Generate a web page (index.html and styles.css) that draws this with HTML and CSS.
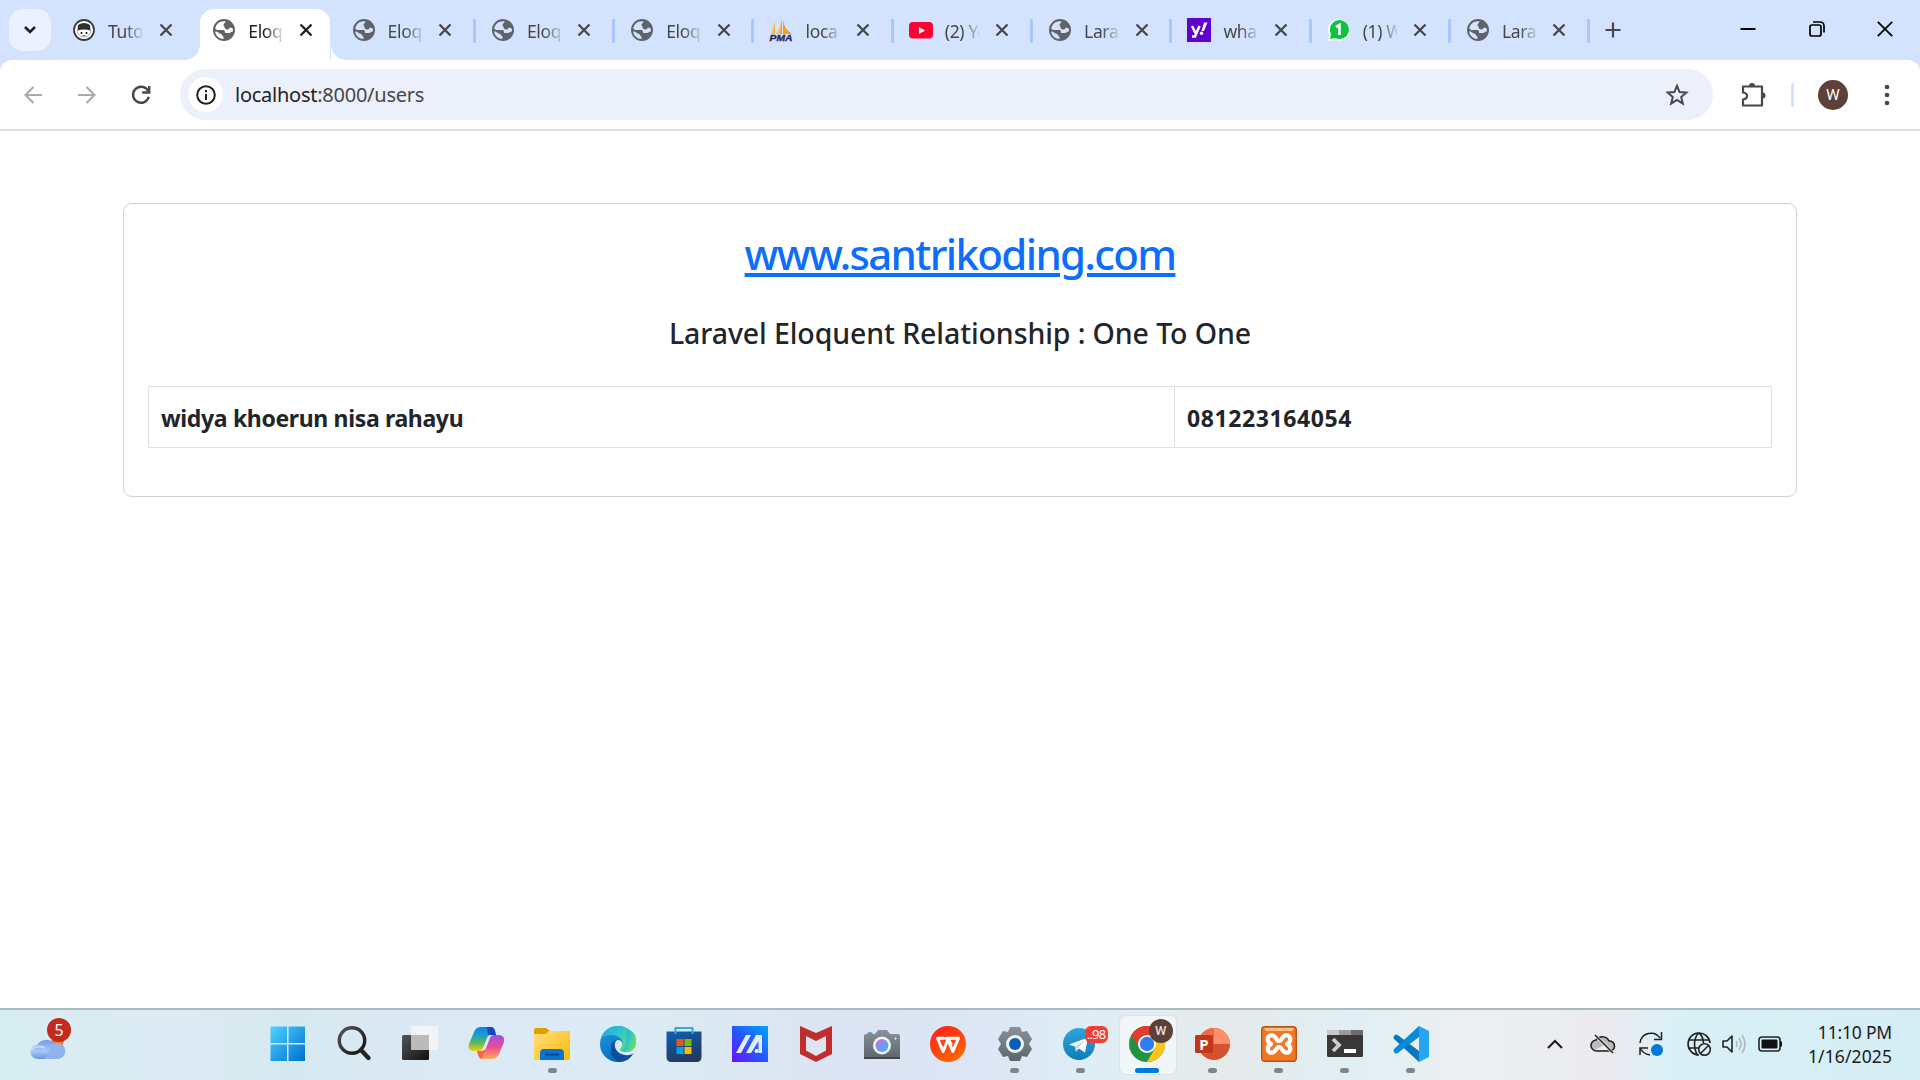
FILE: index.html
```html
<!DOCTYPE html>
<html lang="en">
<head>
<meta charset="utf-8">
<title>Eloquent</title>
<link rel="stylesheet" href="styles.css">
</head>
<body>
<svg class="defs" aria-hidden="true">
  <defs>
    <symbol id="globe" viewBox="0 0 22 22"><path fill="#5f6368" fill-rule="evenodd" d="M11 0a11 11 0 1 0 0 22a11 11 0 0 0 0-22zM12.500 2.300C7 1.600 3.300 4.500 2.200 9.500L4 11h6.500c1.500 0 1.500 2 1.500 3h4c1.500 0 2-1.500 3.800-1.500.3-1 .2-2-.1-3l-2.200-1c-1.500 0-1 2-3 2-2 0-3-1-3-2.500S10.500 7.500 10.500 6s2-1.500 2-3.700zM2.100 12.500c.6 4.300 4 7.400 8.400 7.500v-2.500c-1.500 0-1.500-3-3.500-3-1.500 0-1.500-2-4.900-2z"/></symbol>
    <symbol id="close" viewBox="0 0 14 14"><path d="M1.500 1.500l11 11m0-11l-11 11" fill="none" stroke="currentColor" stroke-width="2.300"/></symbol>
    <linearGradient id="win" x2="1" y2="1"><stop stop-color="#4cd4ff"/><stop offset="1" stop-color="#006fd0"/></linearGradient>
    <linearGradient id="glass" x2="1" y2="1"><stop stop-color="#555"/><stop offset="1" stop-color="#111"/></linearGradient>
    <linearGradient id="cop1" x2="0" y2="1"><stop stop-color="#1b7ee0"/><stop offset=".3" stop-color="#159bd8"/><stop offset=".65" stop-color="#5bb755"/><stop offset="1" stop-color="#f5ce16"/></linearGradient>
    <linearGradient id="cop2" x2="0" y2="1"><stop stop-color="#9a4ff0"/><stop offset=".5" stop-color="#ee4c91"/><stop offset="1" stop-color="#ffac57"/></linearGradient>
    <linearGradient id="fold" x2="1" y2="1"><stop stop-color="#ffe07a"/><stop offset="1" stop-color="#fbb908"/></linearGradient>
    <linearGradient id="edge1" x2="1" y2=".6"><stop stop-color="#22a5df"/><stop offset=".5" stop-color="#31c3d0"/><stop offset="1" stop-color="#68e84b"/></linearGradient>
    <linearGradient id="edge2" x2=".5" y2="1"><stop stop-color="#1a9ee0"/><stop offset="1" stop-color="#0868bd"/></linearGradient>
    <linearGradient id="store" x2=".4" y2="1"><stop stop-color="#0a62b4"/><stop offset="1" stop-color="#233a61"/></linearGradient>
    <linearGradient id="asus" x1="0" y1="1" x2="1" y2="0"><stop stop-color="#6a10ff"/><stop offset=".5" stop-color="#2459ff"/><stop offset="1" stop-color="#00a5ff"/></linearGradient>
    <linearGradient id="lens" x2=".7" y2="1"><stop stop-color="#c86ee8"/><stop offset="1" stop-color="#3fb1f0"/></linearGradient>
    <linearGradient id="grey" x2="0" y2="1"><stop stop-color="#88929a"/><stop offset="1" stop-color="#5d656c"/></linearGradient>
    <linearGradient id="wps" x2=".6" y2="1"><stop stop-color="#ff1b1b"/><stop offset="1" stop-color="#ff6505"/></linearGradient>
    <linearGradient id="tele" x2="0" y2="1"><stop stop-color="#2ea6df"/><stop offset="1" stop-color="#0c7cbb"/></linearGradient>
    <linearGradient id="cloud" x2="0" y2="1"><stop stop-color="#6f9ce8"/><stop offset=".6" stop-color="#a9c8f8"/><stop offset="1" stop-color="#6c93dd"/></linearGradient>
  </defs>
</svg>

<header class="tabstrip">
  <button class="tab-search"><svg width="14" height="10" viewBox="0 0 14 10"><path d="M2 2l5 5 5-5" fill="none" stroke="#1f1f1f" stroke-width="2.600"/></svg></button>
  <nav class="tabs">
    <div class="tab plain"><svg class="fav" viewBox="0 0 22 22"><circle cx="11" cy="11" r="10" fill="#fff" stroke="#3b3b3b" stroke-width="1.800"/><path d="M5 6q6-4 12 0l.5 5.500q-6.500-2-13 0z" fill="#2f3033"/><path d="M4.500 11v3q2 4 6.500 4t6.500-4v-3" fill="none" stroke="#aaa"/><circle cx="8.500" cy="14" r="1"/><circle cx="13.500" cy="14" r="1"/><path d="M9.500 16.500h3" stroke="#777"/></svg><span class="label">Tutorial</span><svg class="x"><use href="#close"/></svg></div>
    <div class="tab active"><svg class="fav"><use href="#globe"/></svg><span class="label">Eloquent</span><svg class="x"><use href="#close"/></svg></div>
    <div class="tab"><svg class="fav"><use href="#globe"/></svg><span class="label">Eloquent</span><svg class="x"><use href="#close"/></svg></div>
    <div class="tab"><svg class="fav"><use href="#globe"/></svg><span class="label">Eloquent</span><svg class="x"><use href="#close"/></svg></div>
    <div class="tab"><svg class="fav"><use href="#globe"/></svg><span class="label">Eloquent</span><svg class="x"><use href="#close"/></svg></div>
    <div class="tab"><svg class="fav wide" viewBox="0 0 24 24"><path d="M2 16L6 4v12zM7 16Q12 9 13 0v16zM14 2q1 9 9 14h-9z" fill="#f89c1c"/><path d="M2 16L6 4l-1 12zM7 16Q12 9 13 0l-2 16z" fill="#fbc57b"/><text x="12" y="23" class="pma" text-anchor="middle" textLength="23" lengthAdjust="spacingAndGlyphs">PMA</text></svg><span class="label">localhost</span><svg class="x"><use href="#close"/></svg></div>
    <div class="tab"><svg class="fav wide" viewBox="0 0 24 24"><rect y="4" width="24" height="16.500" rx="4" fill="#ff0033"/><path d="M10 9v7l6-3.500z" fill="#fff"/></svg><span class="label">(2) YouTube</span><svg class="x"><use href="#close"/></svg></div>
    <div class="tab"><svg class="fav"><use href="#globe"/></svg><span class="label">Laravel</span><svg class="x"><use href="#close"/></svg></div>
    <div class="tab"><svg class="fav wide" viewBox="0 0 24 24"><path d="M0 0h24v24H0z" fill="#5f01d1"/><path d="M5 8l3.500 7M12.500 8L8 18.500H5" fill="none" stroke="#fff" stroke-width="2.600"/><path d="M17 4.500h3.500L17 13h-2.500z" fill="#fff"/><circle cx="14.500" cy="15.300" r="1.700" fill="#fff"/></svg><span class="label">whatsapp</span><svg class="x"><use href="#close"/></svg></div>
    <div class="tab"><svg class="fav wide" viewBox="0 0 24 24"><path d="M1 23l1-6A11 11 0 1 1 8 22.500z" fill="#f5fff8"/><path d="M3 21l1-5A9.500 9.500 0 1 1 8 20z" fill="#12c143"/><path d="M9 9l3.500-2v10" fill="none" stroke="#fff" stroke-width="2.600"/></svg><span class="label">(1) WhatsApp</span><svg class="x"><use href="#close"/></svg></div>
    <div class="tab"><svg class="fav"><use href="#globe"/></svg><span class="label">Laravel</span><svg class="x"><use href="#close"/></svg></div>
  </nav>
  <svg class="plus" width="16" height="16" viewBox="0 0 16 16"><path d="M8 .5v15M.5 8h15" stroke="#474747" stroke-width="2.200"/></svg>
  <div class="window-controls">
    <svg width="16" height="16" viewBox="0 0 16 16"><path d="M.5 8h15" stroke="#000" stroke-width="2"/></svg>
    <svg width="16" height="16" viewBox="0 0 16 16"><g fill="none" stroke="#000" stroke-width="1.700"><rect x="1" y="4" width="11" height="11" rx="2"/><path d="M4 1h7a4 4 0 0 1 4 4v6.500"/></g></svg>
    <svg width="16" height="16" viewBox="0 0 16 16"><path d="M.8.8l14.400 14.400m0-14.400L.8 15.200" stroke="#000" stroke-width="1.800"/></svg>
  </div>
</header>

<div class="toolbar-wrap">
<div class="toolbar">
  <div class="nav-icons">
    <svg width="18" height="18" viewBox="0 0 18 18"><path d="M18 9H2M9.500 1L1.500 9l8 8" fill="none" stroke="#aaabad" stroke-width="2.100"/></svg>
    <svg width="18" height="18" viewBox="0 0 18 18"><path d="M0 9h16M8.500 1l8 8-8 8" fill="none" stroke="#aaabad" stroke-width="2.100"/></svg>
    <svg width="20" height="20" viewBox="0 0 20 20"><path d="M17.800 11.800a8 8 0 1 1-1.600-7.200L18 7M18.200 1v6.500h-7" fill="none" stroke="#474747" stroke-width="2.400"/></svg>
  </div>
  <div class="omnibox">
    <span class="info"><svg width="20" height="20" viewBox="0 0 20 20"><circle cx="10" cy="10" r="8.800" fill="none" stroke="#1f1f1f" stroke-width="2"/><path d="M10 9v6M10 5v2.200" stroke="#1f1f1f" stroke-width="2"/></svg></span>
    <span class="url"><b>localhost</b>:8000/users</span>
    <svg class="star" width="24" height="24" viewBox="0 0 24 24"><path d="M12 2.800l2.600 6.300 6.700.5-5.100 4.400 1.600 6.600-5.800-3.600-5.800 3.600L7.800 14 2.700 9.600l6.700-.5z" fill="none" stroke="#474747" stroke-width="2"/></svg>
  </div>
  <svg class="ext" width="26" height="26" viewBox="0 0 26 26"><path d="M3 4.500h19v19H3v-6q4-.5 4-3.500T3 10.500z" fill="none" stroke="#474747" stroke-width="2.200" stroke-linejoin="round"/><path d="M9 4a3 3 0 0 1 6 0zM22.500 10.500a3 3 0 0 1 0 6z" fill="#474747"/></svg>
  <i class="divider"></i>
  <span class="avatar">W</span>
  <svg class="menu" width="6" height="22" viewBox="0 0 6 22"><g fill="#474747"><circle cx="3" cy="3" r="2.300"/><circle cx="3" cy="11" r="2.300"/><circle cx="3" cy="19" r="2.300"/></g></svg>
</div>
</div>

<main>
  <section class="card">
    <h1><a href="#">www.santrikoding.com</a></h1>
    <h2>Laravel Eloquent Relationship : One To One</h2>
    <div class="row"><div class="name">widya khoerun nisa rahayu</div><div class="phone">081223164054</div></div>
  </section>
</main>

<footer class="taskbar">
  <div class="weather"><svg width="42" height="46" viewBox="0 0 42 46"><path d="M22 24h13l-2 9h-8z" fill="#f57c1b"/><path d="M9 43a7 7 0 0 1-1-14A11 11 0 0 1 25 27a8 8 0 0 1 3 16z" fill="url(#cloud)"/><path d="M21 32a8 8 0 1 1 7 11H16z" fill="#8fb3ef"/><path d="M2 34q6-6 14-2" stroke="#c2d9fc" fill="none" stroke-width="2"/></svg><span class="count">5</span></div>
  <div class="apps">
    <div class="app"><svg viewBox="0 0 36 36"><path d="M.5.500h16.500v16.500H.5zM18.500.500H35v16.500H18.500zM.5 18.500h16.500V35H.5zM18.500 18.500H35V35H18.500z" fill="url(#win)"/></svg></div>
    <div class="app"><svg viewBox="0 0 36 36"><circle cx="16" cy="14.500" r="12.700" fill="none" stroke="url(#glass)" stroke-width="3.400"/><path d="M25 24l7.500 8" stroke="#242424" stroke-width="4.400" stroke-linecap="round"/></svg></div>
    <div class="app"><svg viewBox="0 0 36 36"><rect y="9" width="27" height="25" rx="1.500" fill="url(#glass)"/><path d="M9 0h27v24H9z" fill="#f3f3f3"/><path d="M9 9h18v15H9z" fill="#bbb"/></svg></div>
    <div class="app"><svg viewBox="0 0 36 36"><path d="M13 1h10q3 0 4 4l1 4h-6q-2 0-3 3l-4 10q-1 3-4 3H5c-4 0-5-3-4-7L6 6q2-5 7-5z" fill="url(#cop1)"/><path d="M18 1h5q3 0 4 4l1 4h-6c-4 0-1-7-4-8z" fill="#1647c4"/><path d="M23 33H14q-3 0-4-4l-1-4h5q3 0 4-3l4-10q1-3 4-3h5c4 0 6 3 5 7l-5 12q-2 5-8 5z" fill="url(#cop2)"/><path d="M9 25h5q2 0 3-2l-2 8q-1 3-3 1-2-3-3-7z" fill="#f8673f"/></svg></div>
    <div class="app running"><svg viewBox="0 0 36 36"><path d="M0 4q0-2 2-2h10l4 3v4H0z" fill="#dca000"/><path d="M0 8h12l3-3h21v27q0 2-2 2H2q-2 0-2-2z" fill="url(#fold)"/><path d="M6 34v-7q0-4 4-4h16q4 0 4 4v7z" fill="#0874cd"/><path d="M11 28.500h14" stroke="#034a8b" stroke-width="2"/></svg></div>
    <div class="app"><svg viewBox="0 0 36 36"><circle cx="18" cy="18" r="18" fill="url(#edge2)"/><path d="M1 12C4 4 10 0 18 0c10 0 18 7 18 16 0 7-5 10-11 10-4 0-6-2-4-4 5-7-2-13-10-13Q5 9 1 12z" fill="url(#edge1)"/><path d="M11 22q0-7 5-8c-3 7 2 15 11 15q4 0 6-1-5 8-14 8c-6-2-9-8-8-14z" fill="#0c4f9a"/><path d="M21 22c3-4 1-8-3-8-5 1-5 13 7 15q5 1 9-2l2-3v-8c0 7-5 10-11 10-4 0-6-2-4-4z" fill="#dce8f5"/><path d="M24 22q-4 4 2 4 8-.5 10-8V12q-2-8-9-8-1 9-1 13z" fill="url(#edge1)"/></svg></div>
    <div class="app"><svg viewBox="0 0 36 36"><path d="M.5 5.500h35V31q0 5-5 5h-25q-5 0-5-5z" fill="url(#store)"/><path d="M9.500 8V2h17v6" fill="none" stroke="#27aeea" stroke-width="2"/><path d="M10.500 13h7v7h-7z" fill="#f25022"/><path d="M18.500 13h7v7h-7z" fill="#7fba00"/><path d="M10.500 21h7v7h-7z" fill="#00a4ef"/><path d="M18.500 21h7v7h-7z" fill="#ffb900"/></svg></div>
    <div class="app"><svg viewBox="0 0 36 36"><path d="M0 0h36v36H0z" fill="url(#asus)"/><path d="M4 27L14 9h5L9 27zM14 27L24 9h6v18h-3.500V15L19 27z" fill="#e5eaff"/><circle cx="24.500" cy="25" r="2" fill="#fff"/></svg></div>
    <div class="app"><svg viewBox="0 0 36 36"><path d="M2 0l16 7 16-7v28l-16 8-16-8z" fill="#c12c2c"/><path d="M8 10l10 5 10-5v14.500L18 30 8 24.500z" fill="#dce4f2"/></svg></div>
    <div class="app"><svg viewBox="0 0 36 36"><path d="M3 9q0-3 3-3t3 3z" fill="#31a7df"/><path d="M2 8h9l3-4h9l3 4h8q2 0 2 2v23H0V10q0-2 2-2z" fill="url(#grey)"/><path d="M0 31h36v2H0z" fill="#42474b"/><circle cx="18" cy="19.500" r="9" fill="#f4f4f7"/><circle cx="18" cy="19.500" r="6.500" fill="url(#lens)"/><path d="M31.500 11v3m-1.500-1.500h3" stroke="#ccd"/></svg></div>
    <div class="app"><svg viewBox="0 0 36 36"><circle cx="18" cy="18" r="18" fill="url(#wps)"/><path d="M13.500 12.200H7.500L13 25.500l5-12 4.800 12L28.500 12.200H16M18 12.200l3 6" fill="none" stroke="#fff" stroke-width="3" stroke-linejoin="round" stroke-linecap="round"/></svg></div>
    <div class="app running"><svg viewBox="0 0 36 36"><path d="M13 1h10l2 5 5-1 5 8-3 5 3 5-5 8-5-1-2 5H13l-2-5-5 1-5-8 3-5-3-5 5-8 5 1z" fill="url(#grey)"/><circle cx="18" cy="18" r="9" fill="#eef1f4"/><circle cx="18" cy="18" r="6" fill="#0860b6"/></svg></div>
    <div class="app running"><svg viewBox="0 0 36 36"><circle cx="16" cy="18" r="16" fill="url(#tele)"/><path d="M6 18.500l19-7-3 15-6-4-3 3-1-5z" fill="#fff"/><path d="M12 20.500l10-6.500-7 8-2 4z" fill="#b5d8ec"/></svg><span class="badge unread">..98</span></div>
    <div class="app running current"><svg viewBox="0 0 36 36"><circle cx="18" cy="18" r="18" fill="#229342"/><path d="M2.400 9A18 18 0 0 1 33.600 9H18L10.200 22.500z" fill="#e33b2e"/><path d="M33.600 9A18 18 0 0 1 18 36l7.800-13.500L18 9z" fill="#fcc51b"/><circle cx="18" cy="18" r="9" fill="#fff"/><circle cx="18" cy="18" r="7.200" fill="#2f7df1"/></svg><span class="badge profile">W</span></div>
    <div class="app running"><svg viewBox="0 0 36 36"><circle cx="19" cy="18" r="16" fill="#d35230"/><path d="M19 2a16 16 0 0 1 16 16H19z" fill="#ff8f6b"/><path d="M3 18A16 16 0 0 1 19 2v16z" fill="#ed6c47"/><rect x="0" y="9" width="18" height="18" rx="1.500" fill="#c43619"/><text x="9" y="23.500" class="ppt" text-anchor="middle">P</text></svg></div>
    <div class="app running"><svg viewBox="0 0 36 36"><rect x=".7" y=".7" width="34.600" height="34.600" rx="3" fill="#f37623" stroke="#b65718" stroke-width="1.400"/><path d="M3 2h30l-2 3H5z" fill="#ffc08c"/><path d="M12 9.500c-6-1.500-7 6-2 8.500-5 2.500-4 10 2 8.500 3-.8 3-5.500 6-5.500s3 4.700 6 5.500c6 1.500 7-6 2-8.500 5-2.500 4-10-2-8.500-3 .8-3 5.500-6 5.500s-3-4.700-6-5.500z" fill="none" stroke="#fff" stroke-width="4.200" stroke-linejoin="round"/></svg></div>
    <div class="app running"><svg viewBox="0 0 36 36"><rect y="4" width="36" height="27" rx="1.500" fill="#383838"/><path d="M0 9V5l1-1h11v5z" fill="#c9c9c9"/><path d="M12 4h12v5H12z" fill="#9c9c9c"/><path d="M24 4h11l1 1v4H24z" fill="#6c6c6c"/><path d="M6 13l6 6-6 6" fill="none" stroke="#ccc" stroke-width="3.800"/><path d="M17 23h12v4H17z" fill="#fff"/></svg></div>
    <div class="app running"><svg viewBox="0 0 36 36"><path d="M26 0l10 5v26l-10 5z" fill="#27a5f2"/><path d="M1 10q2-3 5 0l20 15v11L1 13q-1-1 0-3z" fill="#0877bf"/><path d="M1 26q2 3 5 0l20-15V0L1 23q-1 1 0 3z" fill="#0b8bd7"/></svg></div>
  </div>
  <div class="tray">
    <svg class="up" width="16" height="10" viewBox="0 0 16 10"><path d="M1 9l7-7 7 7" fill="none" stroke="#1b1b1b" stroke-width="2"/></svg>
    <svg class="drive" width="26" height="22" viewBox="0 0 26 22"><path d="M7 18a5.500 5.500 0 0 1-1-11A7.500 7.500 0 0 1 19 8a5 5 0 0 1 1 10z" fill="#bbb" stroke="#222" stroke-width="1.600"/><path d="M5 17l9-5 7 5z" fill="#eee"/><path d="M5 2l18 18" stroke="#eee" stroke-width="3"/><path d="M5 2l18 18" stroke="#222" stroke-width="1.600"/></svg>
    <svg class="sync" width="26" height="26" viewBox="0 0 26 26"><path d="M2 12A11 11 0 0 1 22 7M23.500 1v7.500H16M10 17H2v7M2 17q3 6 10 7" fill="none" stroke="#222" stroke-width="1.500"/><circle cx="19" cy="19" r="6" fill="#0078d7"/></svg>
    <svg class="net" width="26" height="26" viewBox="0 0 26 26"><g fill="none" stroke="#222" stroke-width="1.600"><path d="M24 12A11 11 0 1 0 13 24M2 9h22M2 17h11M13 2C8 6 7 16 11 23M13 2q4 3 4.500 10"/><circle cx="18.500" cy="18.500" r="5.800"/><path d="M14.500 22.500l8-8"/></g></svg>
    <svg class="vol" width="26" height="22" viewBox="0 0 26 22"><path d="M2 8h4l5-5v16l-5-5H2z" fill="none" stroke="#222" stroke-width="1.600" stroke-linejoin="round"/><path d="M15 8q2 3 0 6M18 5q4 6 0 12M21 2q6 9 0 18" fill="none" stroke="#a9b9bf" stroke-width="1.500"/></svg>
    <svg class="bat" width="26" height="18" viewBox="0 0 26 18"><rect x="1" y="2" width="21" height="14" rx="3" fill="none" stroke="#222" stroke-width="1.600"/><rect x="3.500" y="4.500" width="16" height="9" rx="1" fill="#111"/><path d="M22 6.500h2v5h-2z" fill="#111"/></svg>
    <div class="clock"><span>11:10 PM</span><span>1/16/2025</span></div>
  </div>
</footer>
</body>
</html>
```

FILE: styles.css
```css
* { box-sizing: border-box; }
body {
  margin: 0;
  width: 1920px;
  height: 1080px;
  overflow: hidden;
  display: flex;
  flex-direction: column;
  background: #fff;
  color: #212529;
  font-family: "Noto Sans", "Open Sans", sans-serif;
}
svg { display: block; flex: none; }
.defs { width: 0; height: 0; position: absolute; }

/* Tab strip */
.tabstrip { height: 60px; flex: none; display: flex; background: #d3e2fd; }
.tab-search {
  width: 42px; height: 42px; margin: 9px 10px 0 9px; padding: 0; border: 0; border-radius: 14px;
  background: #ebf1fe; display: flex; align-items: center; justify-content: center;
}
.tabs { display: flex; }
.tab {
  width: 139.3px; height: 51px; margin-top: 9px; padding-left: 13px;
  display: flex; align-items: flex-start; position: relative; color: #474747;
}
.plain { padding-left: 12px; }
.fav { width: 22px; height: 22px; margin: 10px 13px 0 0; }
.fav.wide { width: 24px; height: 24px; margin: 9px 12px 0 -1px; }
.label {
  width: 34px; margin-top: 7px; overflow: hidden; white-space: nowrap;
  font-size: 17.500px; line-height: 30px; letter-spacing: -.35px; font-weight: 400;
  -webkit-mask-image: linear-gradient(90deg, #000 50%, rgba(0,0,0,.15) 100%);
  mask-image: linear-gradient(90deg, #000 50%, rgba(0,0,0,.15) 100%);
}
.x { width: 14px; height: 14px; margin: 14px 0 0 16.500px; }
.tab:not(.plain):not(.active)::after {
  content: ""; position: absolute; right: 3px; top: 10px; width: 3px; height: 24px; border-radius: 1px; background: #a8c7fa;
}
.tab.active { color: #1f1f1f; }
.tab.active::before {
  content: ""; position: absolute; z-index: 0; left: 0; top: 0; width: 130px; height: 51px;
  border-radius: 14px 14px 0 0; background: #fff;
}
.tab.active::after {
  content: ""; position: absolute; left: -15px; right: -6px; bottom: 0; height: 15px;
  background:
    radial-gradient(circle at 0 0, transparent 14.500px, #fff 15px) left / 15px 15px no-repeat,
    radial-gradient(circle at 100% 0, transparent 14.500px, #fff 15px) right / 15px 15px no-repeat;
}
.tab.active > * { position: relative; z-index: 1; }
.pma { font: italic bold 8.500px "Liberation Sans", sans-serif; fill: #2b2857; stroke: #2b2857; stroke-width: .3; }
.plus { margin: 22px 0 0 12px; }
.window-controls { margin: 21px 27px 0 auto; display: flex; gap: 52.500px; }

/* Toolbar */
.toolbar-wrap { flex: none; background: #d3e2fd; }
.toolbar {
  height: 71px; background: #fff; border-radius: 12px 12px 0 0; border-bottom: 2px solid #dfdfdf;
  display: flex; align-items: center;
}
.nav-icons { width: 180px; padding-left: 24px; display: flex; align-items: center; gap: 35.500px; }
.omnibox {
  width: 1533px; height: 51px; border-radius: 26px; background: #ebf0fa;
  display: flex; align-items: center; padding: 0 24px 0 8px;
}
.info { width: 35px; height: 35px; border-radius: 50%; background: #fff; display: grid; place-items: center; }
.url { margin-left: 12px; font-size: 20px; line-height: 30px; color: #474747; letter-spacing: -.25px; }
.url b { font-weight: 400; color: #1f1f1f; }
.star { margin-left: auto; }
.ext { margin-left: 27px; }
.divider { width: 3px; height: 24px; margin-left: 25px; background: #d3e2fd; border-radius: 1px; }
.avatar {
  width: 30px; height: 30px; margin-left: 24px; border-radius: 50%; background: #5d4037; color: #fff;
  font: 400 15.500px/30px Roboto, sans-serif; text-align: center;
}
.menu { margin-left: 36px; }

/* Page */
main { flex: 1; padding: 72px 123px 0; }
.card { height: 294px; border: 1px solid #d0d2d4; border-radius: 9px; padding: 22px 24px; }
h1, h2 { margin: 0; text-align: center; white-space: nowrap; }
h1 { font-size: 42px; line-height: 56px; font-weight: 550; letter-spacing: -1.650px; }
h1 a { color: #0d6efd; text-decoration-thickness: 4px; text-underline-offset: 3px; }
h2 { margin-top: 31px; font-size: 28.500px; line-height: 40px; font-weight: 550; letter-spacing: -.1px; }
.row {
  margin-top: 33px; height: 62px; border: 1px solid #dee2e6; display: flex;
  font-size: 23px; line-height: 62px; font-weight: 700; white-space: nowrap;
}
.name { width: 1026px; padding-left: 12px; border-right: 1px solid #dee2e6; letter-spacing: -.350px; }
.phone { padding-left: 12px; letter-spacing: .6px; }

/* Taskbar */
.taskbar {
  height: 72px; flex: none; border-top: 2px solid #adb9c1; display: flex;
  background: linear-gradient(90deg, #d6edf1 0, #ddebf4 180px, #d6e9f0 290px, #dbe9f4 400px, #dcebf4 650px, #dce4f3 860px, #dde6f5 980px, #deeef5 1090px, #e6eaea 1230px, #e0eff4 1350px, #eceff0 1460px, #ebebef 1610px, #d9f0f7 1670px, #d5edf4 1920px);
}
.weather { position: relative; width: 255px; padding: 6px 0 0 29px; }
.count {
  position: absolute; left: 47px; top: 8px; width: 24px; height: 24px; border-radius: 50%;
  background: #c42b1c; color: #fff; font-size: 16px; line-height: 24px; text-align: center;
}
.apps { display: flex; }
.app { position: relative; width: 66.050px; height: 70px; display: flex; justify-content: center; padding-top: 16px; }
.app > svg { width: 36px; height: 36px; position: relative; }
.running::after {
  content: ""; position: absolute; left: 28.500px; top: 58px; width: 9px; height: 5px; border-radius: 3px; background: #7f868b;
}
.current::before {
  content: ""; position: absolute; left: 5px; top: 5px; width: 56px; height: 58px; border-radius: 7px;
  background: #f1f6f8; border: 1px solid #d9e2e5;
}
.current::after { left: 21px; width: 24px; background: #0078d7; }
.badge { position: absolute; color: #fff; text-align: center; }
.unread { left: 37px; top: 16px; width: 23px; height: 17px; border-radius: 6px; background: #f23c34; font-size: 13px; line-height: 17px; letter-spacing: -.8px; }
.profile { left: 35px; top: 9px; width: 24px; height: 24px; border-radius: 50%; background: #5d4037; color: #e7dfdc; font: 500 13px/24px Roboto, sans-serif; }
.ppt { font: bold 15px "Noto Sans", sans-serif; fill: #fff; }
.tray { margin-left: auto; padding-right: 28px; display: flex; align-items: center; height: 68px; }
.drive { margin-left: 27px; }
.sync { margin-left: 22px; }
.net { margin-left: 22px; }
.vol { margin-left: 9px; }
.bat { margin-left: 11px; }
.clock { width: 108px; display: flex; flex-direction: column; text-align: right; font-size: 17.500px; line-height: 24px; color: #1b1b1b; white-space: nowrap; }
.clock span:first-child { letter-spacing: -.2px; }
.clock span:last-child { letter-spacing: .1px; }
```
